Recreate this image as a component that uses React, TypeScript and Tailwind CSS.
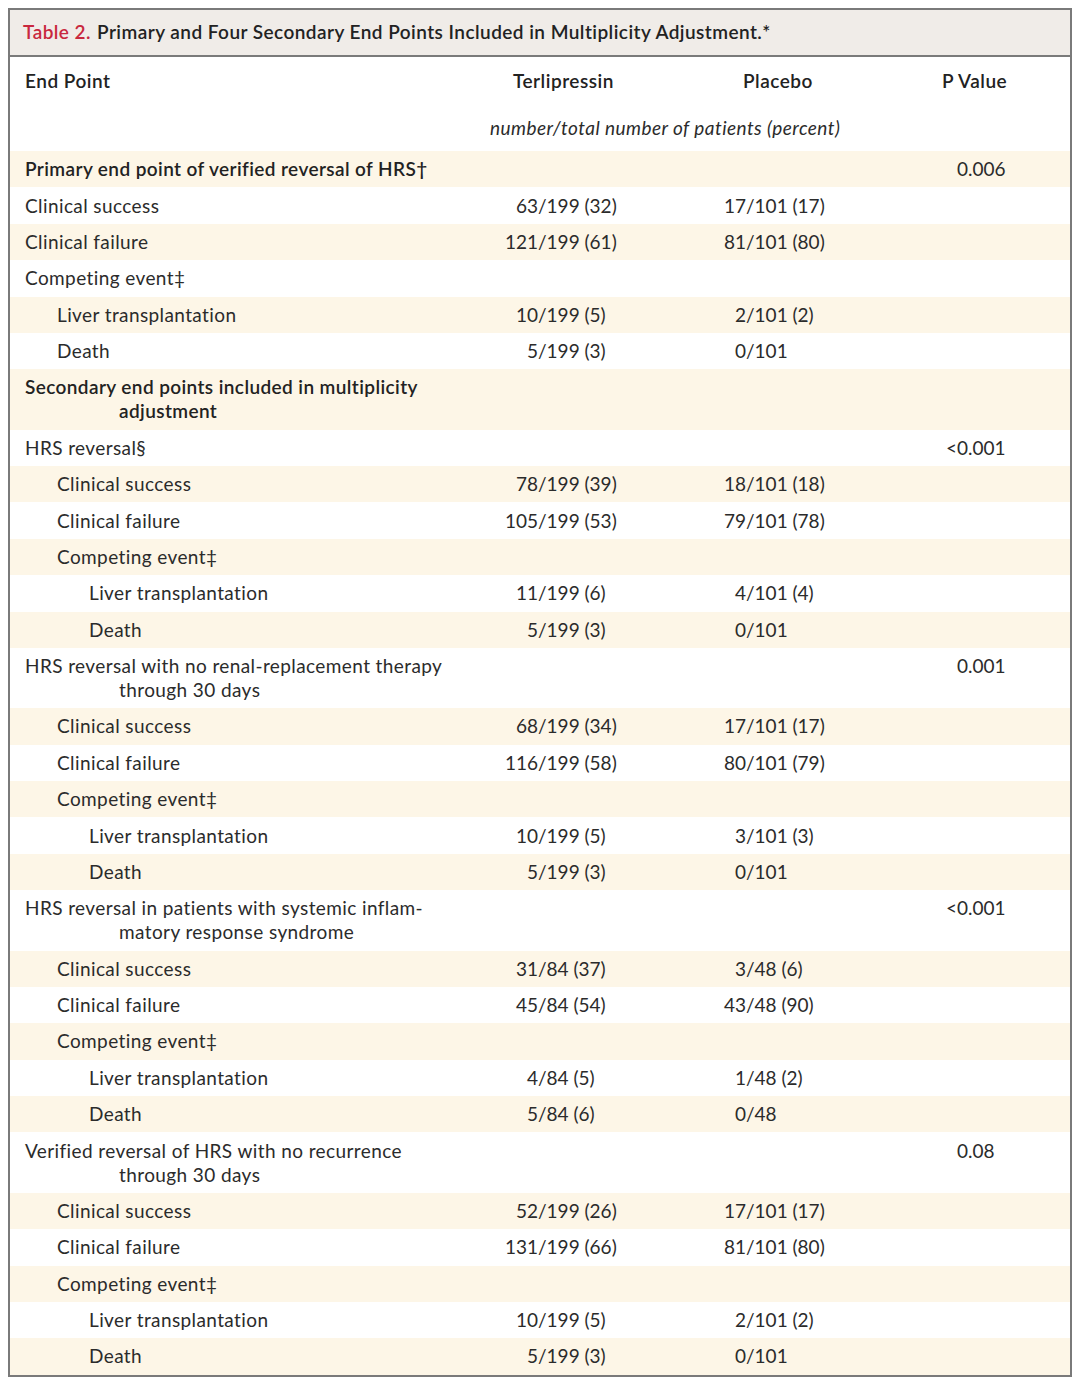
import React from 'react';

type Row = {
  label: string;
  cont?: string;
  level: number;
  bold?: boolean;
  terl?: [string, string];
  plac?: [string, string];
  p?: [string, string];
};

const rows: Row[] = [
  { label: 'Primary end point of verified reversal of HRS†', level: 0, bold: true, p: ['0', '.006'] },
  { label: 'Clinical success', level: 0, terl: ['63', '/199 (32)'], plac: ['17', '/101 (17)'] },
  { label: 'Clinical failure', level: 0, terl: ['121', '/199 (61)'], plac: ['81', '/101 (80)'] },
  { label: 'Competing event‡', level: 0 },
  { label: 'Liver transplantation', level: 1, terl: ['10', '/199 (5)'], plac: ['2', '/101 (2)'] },
  { label: 'Death', level: 1, terl: ['5', '/199 (3)'], plac: ['0', '/101'] },
  { label: 'Secondary end points included in multiplicity', cont: 'adjustment', level: 0, bold: true },
  { label: 'HRS reversal§', level: 0, p: ['<0', '.001'] },
  { label: 'Clinical success', level: 1, terl: ['78', '/199 (39)'], plac: ['18', '/101 (18)'] },
  { label: 'Clinical failure', level: 1, terl: ['105', '/199 (53)'], plac: ['79', '/101 (78)'] },
  { label: 'Competing event‡', level: 1 },
  { label: 'Liver transplantation', level: 2, terl: ['11', '/199 (6)'], plac: ['4', '/101 (4)'] },
  { label: 'Death', level: 2, terl: ['5', '/199 (3)'], plac: ['0', '/101'] },
  { label: 'HRS reversal with no renal-replacement therapy', cont: 'through 30 days', level: 0, p: ['0', '.001'] },
  { label: 'Clinical success', level: 1, terl: ['68', '/199 (34)'], plac: ['17', '/101 (17)'] },
  { label: 'Clinical failure', level: 1, terl: ['116', '/199 (58)'], plac: ['80', '/101 (79)'] },
  { label: 'Competing event‡', level: 1 },
  { label: 'Liver transplantation', level: 2, terl: ['10', '/199 (5)'], plac: ['3', '/101 (3)'] },
  { label: 'Death', level: 2, terl: ['5', '/199 (3)'], plac: ['0', '/101'] },
  { label: 'HRS reversal in patients with systemic inflam-', cont: 'matory response syndrome', level: 0, p: ['<0', '.001'] },
  { label: 'Clinical success', level: 1, terl: ['31', '/84 (37)'], plac: ['3', '/48 (6)'] },
  { label: 'Clinical failure', level: 1, terl: ['45', '/84 (54)'], plac: ['43', '/48 (90)'] },
  { label: 'Competing event‡', level: 1 },
  { label: 'Liver transplantation', level: 2, terl: ['4', '/84 (5)'], plac: ['1', '/48 (2)'] },
  { label: 'Death', level: 2, terl: ['5', '/84 (6)'], plac: ['0', '/48'] },
  { label: 'Verified reversal of HRS with no recurrence', cont: 'through 30 days', level: 0, p: ['0', '.08'] },
  { label: 'Clinical success', level: 1, terl: ['52', '/199 (26)'], plac: ['17', '/101 (17)'] },
  { label: 'Clinical failure', level: 1, terl: ['131', '/199 (66)'], plac: ['81', '/101 (80)'] },
  { label: 'Competing event‡', level: 1 },
  { label: 'Liver transplantation', level: 2, terl: ['10', '/199 (5)'], plac: ['2', '/101 (2)'] },
  { label: 'Death', level: 2, terl: ['5', '/199 (3)'], plac: ['0', '/101'] },
];

const indent = ['pl-[15px]', 'pl-[47px]', 'pl-[79px]'];

// numbers line up on the slash / decimal point
function Aligned({ v, w }: { v?: [string, string]; w: string }) {
  if (!v) return <div />;
  return (
    <div className="flex">
      <span className={`${w} text-right`}>{v[0]}</span>
      <span>{v[1]}</span>
    </div>
  );
}

export default function App() {
  return (
    <div className="min-h-screen bg-white p-[8px] text-[#2b2b2b]" style={{ fontFamily: 'Lato, "Open Sans", sans-serif' }}>
      <div className="border-2 border-[#7a7a7a] bg-white">
        {/* Title bar */}
        <div className="bg-[#f0ece8] border-b-2 border-[#7a7a7a] h-[47px] flex items-center pl-[13px] text-[19px] font-semibold text-[#222] tracking-[0.45px]">
          <span className="text-[#c9283e] mr-[6px]">Table 2.</span>
          Primary and Four Secondary End Points Included in Multiplicity Adjustment.*
        </div>

        {/* Column headers */}
        <div className="grid grid-cols-[460px_210px_210px_1fr] text-[19px] font-semibold text-[#222] h-[48px] items-center tracking-[0.5px]">
          <div className="pl-[15px]">End Point</div>
          <div className="pl-[43px]">Terlipressin</div>
          <div className="pl-[63px]">Placebo</div>
          <div className="pl-[52px]">P Value</div>
        </div>
        <div className="grid grid-cols-[460px_210px_210px_1fr] text-[19px] h-[46px] items-center">
          <div />
          <div className="col-span-2 pl-[20px] italic tracking-[0.45px]">number/total number of patients (percent)</div>
          <div />
        </div>

        {/* Body rows */}
        <div>
          {rows.map((r, i) => (
            <div
              key={i}
              className={`grid grid-cols-[460px_210px_210px_1fr] text-[19px] leading-[24px] py-[6.2px] ${
                i % 2 === 0 ? 'bg-[#fdf6e7]' : 'bg-white'
              }`}
            >
              <div className={`${indent[r.level]} tracking-[0.4px] ${r.bold ? 'font-semibold text-[#222]' : ''}`}>
                <div>{r.label}</div>
                {r.cont && <div className="pl-[94px]">{r.cont}</div>}
              </div>
              <Aligned v={r.terl} w="w-[68px]" />
              <Aligned v={r.plac} w="w-[66px]" />
              <Aligned v={r.p} w="w-[78px]" />
            </div>
          ))}
        </div>
      </div>
    </div>
  );
}
